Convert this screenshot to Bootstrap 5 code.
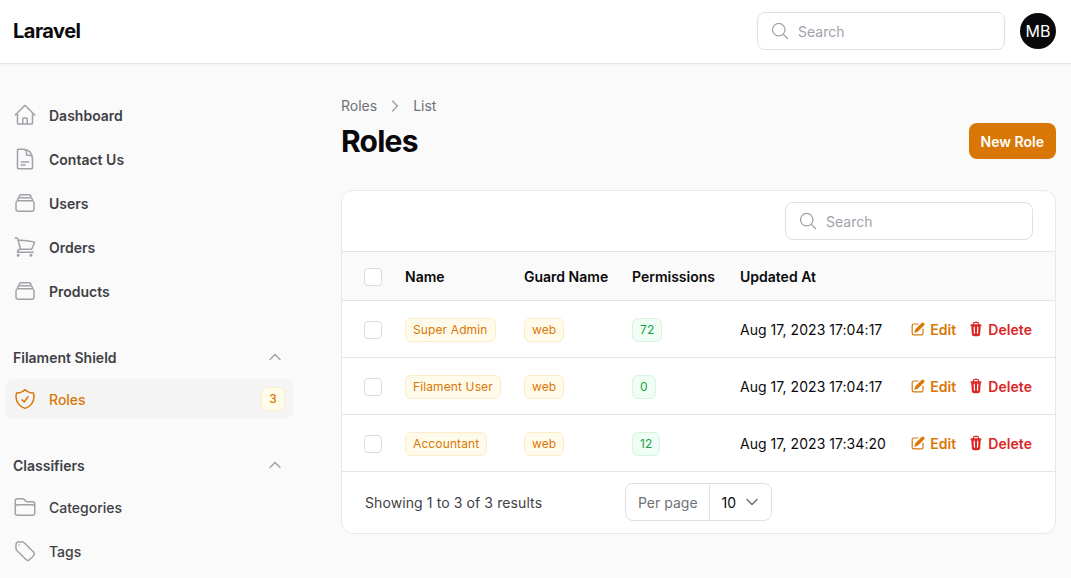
<!DOCTYPE html>
<html lang="en">
<head>
  <meta charset="UTF-8" />
  <meta name="viewport" content="width=device-width, initial-scale=1" />
  <title>Roles - Laravel</title>
  <link href="https://cdn.jsdelivr.net/npm/bootstrap@5.3.0/dist/css/bootstrap.min.css" rel="stylesheet" />
  <style>
    html, body { height: 578px; overflow: hidden; }
    body { background: #fafafa; font-family: Inter, "Liberation Sans", sans-serif; font-size: 14px; color: #09090b; }
    .ic { width: 24px; height: 24px; fill: none; stroke: currentColor; stroke-width: 1.5; stroke-linecap: round; stroke-linejoin: round; flex: none; }
    .ic-solid { width: 16px; height: 16px; fill: currentColor; flex: none; }

    .topbar { height: 64px; background: #fff; border-bottom: 1px solid #e4e4e7; padding: 0 15px 1px 13px; box-shadow: 0 1px 2px rgba(0,0,0,.03); }
    .brand-name { font-size: 20px; font-weight: 700; letter-spacing: -.5px; color: #09090b; }
    .search-box { height: 38px; background: #fff; border: 1px solid #e0e0e4; border-radius: 8px; padding: 0 12px; color: #a1a1aa; gap: 8px; }
    .search-box .ic { width: 20px; height: 20px; }
    .search-top { width: 248px; }
    .search-table { width: 248px; }
    .avatar { width: 36px; height: 36px; border-radius: 50%; background: #09090b; color: #fff; font-size: 16px; margin-left: 15px; }

    .side { width: 300px; flex: none; padding: 31px 7px 0 5px; }
    .side-item { height: 40px; margin-bottom: 4px; padding: 0 8px; gap: 12px; border-radius: 8px; color: #3f3f46; font-weight: 500; text-decoration: none; }
    .side-item .ic { color: #a1a1aa; }
    .side-item.semi { font-weight: 600; }
    .side-item.on { background: #f4f4f5; color: #d97706; margin-bottom: 0; }
    .side-item.on .ic { color: #d97706; }
    .side-count { width: 24px; height: 24px; border-radius: 6px; font-size: 12px; font-weight: 500; background: #fffbeb; color: #d97706; border: 1px solid #fdeccb; margin-left: auto; }
    .side-group { height: 20px; padding: 0 10px 0 8px; margin: 0 0 12px; color: #3f3f46; font-weight: 600; }
    .side-group .ic { width: 16px; height: 16px; color: #a1a1aa; stroke-width: 2.2; }
    .gap-top { margin-top: 36px; }
    .gap-top-2 { margin-top: 36px; }

    .page-area { width: 715px; margin-left: 41px; padding-top: 33px; }
    .crumbs { font-size: 14px; color: #71717a; gap: 10px; height: 17px; }
    .crumbs .ic { width: 16px; height: 16px; color: #a1a1aa; stroke-width: 2.2; }
    .page-title { font-size: 30px; font-weight: 700; letter-spacing: -.75px; line-height: 36px; margin: 0; color: #09090b; }
    .btn-new { height: 36px; padding: 0 12px; background: #d97706; color: #fff; border: 0; border-radius: 8px; font-size: 14px; font-weight: 600; }
    .btn-new:hover { background: #c76d06; color: #fff; }
    .head-row { margin-top: 9px; margin-bottom: 31px; }

    .panel { background: #fff; border: 1px solid #e8e8eb; border-radius: 12px; overflow: hidden; }
    .panel-tools { height: 61px; padding: 0 22px 0 0; border-bottom: 1px solid #e4e4e7; }
    .role-table { width: 100%; margin: 0; border-collapse: collapse; table-layout: fixed; font-size: 14px; }
    .role-table th { height: 48px; background: #fafafa; font-weight: 600; padding: 2px 0 0; border-bottom: 1px solid #e4e4e7; white-space: nowrap; }
    .role-table td { height: 57px; padding: 1px 0 0; border-bottom: 1px solid #e4e4e7; white-space: nowrap; }
    .c-check { width: 63px; padding-left: 22px !important; }
    .c-name { width: 119px; }
    .c-guard { width: 108px; }
    .c-perm { width: 108px; }
    .c-date { width: 165px; }
    .date-text { letter-spacing: .04px; }
    .tick { width: 18px; height: 18px; display: block; background: #fff; border: 1px solid #dcdce0; border-radius: 4px; }
    td .tick { margin-top: 2px; }
    .pill { display: inline-block; font-size: 12px; font-weight: 400; letter-spacing: .12px; line-height: 16px; padding: 3px 7px; margin-top: 2px; border-radius: 6px; border: 1px solid; }
    .pill-amber { background: #fffbeb; color: #d97706; border-color: #fdeccb; }
    .pill-green { background: #f0fdf4; color: #16a34a; border-color: #d5f3df; }
    .act { gap: 12px; font-weight: 600; letter-spacing: .05px; padding-right: 23px; }
    .act a { text-decoration: none; gap: 4px; }
    .act-edit { color: #d97706; }
    .act-del { color: #dc2626; }

    .panel-foot { height: 61px; color: #3f3f46; padding-left: 23px; }
    .foot-text { width: 260px; letter-spacing: .1px; }
    .perpage { height: 38px; border: 1px solid #e0e0e4; border-radius: 8px; color: #71717a; }
    .perpage-label { padding: 0 11px 0 12px; height: 100%; border-right: 1px solid #e4e4e7; }
    .perpage-val { padding: 0 11px 0 12px; color: #09090b; gap: 8px; height: 100%; }
    .perpage-val .ic { width: 16px; height: 16px; color: #71717a; stroke-width: 2.2; }
  </style>
</head>
<body>

  <svg width="0" height="0" class="d-none">
    <symbol id="i-home" viewBox="0 0 24 24"><path d="M2.25 12l8.954-8.955c.44-.439 1.152-.439 1.591 0L21.75 12M4.5 9.75v10.125c0 .621.504 1.125 1.125 1.125H9.75v-4.875c0-.621.504-1.125 1.125-1.125h2.25c.621 0 1.125.504 1.125 1.125V21h4.125c.621 0 1.125-.504 1.125-1.125V9.75M8.25 21h8.25"/></symbol>
    <symbol id="i-doc" viewBox="0 0 24 24"><path d="M19.5 14.25v-2.625a3.375 3.375 0 00-3.375-3.375h-1.5A1.125 1.125 0 0113.5 7.125v-1.5a3.375 3.375 0 00-3.375-3.375H8.25m0 12.75h7.5m-7.5 3H12M10.5 2.25H5.625c-.621 0-1.125.504-1.125 1.125v17.25c0 .621.504 1.125 1.125 1.125h12.75c.621 0 1.125-.504 1.125-1.125V11.25a9 9 0 00-9-9z"/></symbol>
    <symbol id="i-stack" viewBox="0 0 24 24"><path d="M6 6.878V6a2.25 2.25 0 012.25-2.25h7.5A2.25 2.25 0 0118 6v.878m-12 0c.235-.083.487-.128.75-.128h10.5c.263 0 .515.045.75.128m-12 0A2.25 2.25 0 004.5 9v.878m13.5-3A2.25 2.25 0 0119.5 9v.878m0 0a2.246 2.246 0 00-.75-.128H5.25c-.263 0-.515.045-.75.128m15 0A2.25 2.25 0 0121 12v6a2.25 2.25 0 01-2.25 2.25H5.25A2.25 2.25 0 013 18v-6c0-.98.626-1.813 1.5-2.122"/></symbol>
    <symbol id="i-cart" viewBox="0 0 24 24"><path d="M2.25 3h1.386c.51 0 .955.343 1.087.835l.383 1.437M7.5 14.25a3 3 0 00-3 3h15.75m-12.75-3h11.218c1.121-2.3 2.1-4.684 2.924-7.138a60.114 60.114 0 00-16.536-1.84M7.5 14.25L5.106 5.272M6 20.25a.75.75 0 11-1.5 0 .75.75 0 011.5 0zm12.75 0a.75.75 0 11-1.5 0 .75.75 0 011.5 0z"/></symbol>
    <symbol id="i-shield" viewBox="0 0 24 24"><path d="M9 12.75L11.25 15 15 9.75m-3-7.036A11.959 11.959 0 013.598 6 11.99 11.99 0 003 9.749c0 5.592 3.824 10.29 9 11.623 5.176-1.332 9-6.03 9-11.622 0-1.31-.21-2.571-.598-3.751h-.152c-3.196 0-6.1-1.248-8.25-3.285z"/></symbol>
    <symbol id="i-folder" viewBox="0 0 24 24"><path d="M2.25 12.75V12A2.25 2.25 0 014.5 9.75h15A2.25 2.25 0 0121.75 12v.75m-8.69-6.44l-2.12-2.12a1.5 1.5 0 00-1.061-.44H4.5A2.25 2.25 0 002.25 6v12a2.25 2.25 0 002.25 2.25h15A2.25 2.25 0 0021.75 18V9a2.25 2.25 0 00-2.25-2.25h-5.379a1.5 1.5 0 01-1.06-.44z"/></symbol>
    <symbol id="i-tag" viewBox="0 0 24 24"><path d="M9.568 3H5.25A2.25 2.25 0 003 5.25v4.318c0 .597.237 1.17.659 1.591l9.581 9.581c.699.699 1.78.872 2.607.33a18.095 18.095 0 005.223-5.223c.542-.827.369-1.908-.33-2.607L11.16 3.66A2.25 2.25 0 009.568 3z"/><path d="M6 6h.008v.008H6V6z"/></symbol>
    <symbol id="i-search" viewBox="0 0 24 24"><path d="M21 21l-5.197-5.197m0 0A7.5 7.5 0 105.196 5.196a7.5 7.5 0 0010.607 10.607z"/></symbol>
    <symbol id="i-up" viewBox="0 0 24 24"><path d="M4.5 15.75l7.5-7.5 7.5 7.5"/></symbol>
    <symbol id="i-right" viewBox="0 0 24 24"><path d="M8.25 4.5l7.5 7.5-7.5 7.5"/></symbol>
    <symbol id="i-down" viewBox="0 0 24 24"><path d="M19.5 8.25l-7.5 7.5-7.5-7.5"/></symbol>
    <symbol id="i-edit" viewBox="0 0 20 20"><path d="M5.433 13.917l1.262-3.155A4 4 0 017.58 9.42l6.92-6.918a2.121 2.121 0 013 3l-6.92 6.918c-.383.383-.84.685-1.343.886l-3.154 1.262a.5.5 0 01-.65-.65z"/><path d="M3.5 5.75c0-.69.56-1.25 1.25-1.25H10A.75.75 0 0010 3H4.75A2.75 2.75 0 002 5.75v9.5A2.75 2.75 0 004.75 18h9.5A2.75 2.75 0 0017 15.25V10a.75.75 0 00-1.5 0v5.25c0 .69-.56 1.25-1.25 1.25h-9.5c-.69 0-1.25-.56-1.25-1.25v-9.5z"/></symbol>
    <symbol id="i-trash" viewBox="0 0 20 20"><path fill-rule="evenodd" clip-rule="evenodd" d="M8.75 1A2.75 2.75 0 006 3.75v.443c-.795.077-1.584.176-2.365.298a.75.75 0 10.23 1.482l.149-.022.841 10.518A2.75 2.75 0 007.596 19h4.807a2.75 2.75 0 002.742-2.53l.841-10.52.149.023a.75.75 0 00.23-1.482A41.03 41.03 0 0014 4.193V3.75A2.75 2.75 0 0011.25 1h-2.5zM10 4c.84 0 1.673.025 2.5.075V3.75c0-.69-.56-1.25-1.25-1.25h-2.5c-.69 0-1.25.56-1.25 1.25v.325C8.327 4.025 9.16 4 10 4zM8.58 7.72a.75.75 0 00-1.5.06l.3 7.5a.75.75 0 101.5-.06l-.3-7.5zm4.34.06a.75.75 0 10-1.5-.06l-.3 7.5a.75.75 0 101.5.06l.3-7.5z"/></symbol>
  </svg>

  <!-- Topbar -->
  <header class="topbar d-flex align-items-center justify-content-between">
    <span class="brand-name">Laravel</span>
    <div class="d-flex align-items-center">
      <div class="search-box search-top d-flex align-items-center">
        <svg class="ic"><use href="#i-search"/></svg>
        <span>Search</span>
      </div>
      <div class="avatar d-flex align-items-center justify-content-center">MB</div>
    </div>
  </header>

  <div class="d-flex">
    <!-- Sidebar -->
    <nav class="side">
      <a class="side-item semi d-flex align-items-center" href="#"><svg class="ic"><use href="#i-home"/></svg>Dashboard</a>
      <a class="side-item semi d-flex align-items-center" href="#"><svg class="ic"><use href="#i-doc"/></svg>Contact Us</a>
      <a class="side-item semi d-flex align-items-center" href="#"><svg class="ic"><use href="#i-stack"/></svg>Users</a>
      <a class="side-item semi d-flex align-items-center" href="#"><svg class="ic"><use href="#i-cart"/></svg>Orders</a>
      <a class="side-item semi d-flex align-items-center" href="#"><svg class="ic"><use href="#i-stack"/></svg>Products</a>

      <div class="side-group gap-top d-flex align-items-center justify-content-between">
        <span>Filament Shield</span>
        <svg class="ic"><use href="#i-up"/></svg>
      </div>
      <a class="side-item on d-flex align-items-center" href="#">
        <svg class="ic"><use href="#i-shield"/></svg>Roles
        <span class="side-count d-flex align-items-center justify-content-center">3</span>
      </a>

      <div class="side-group gap-top-2 d-flex align-items-center justify-content-between">
        <span>Classifiers</span>
        <svg class="ic"><use href="#i-up"/></svg>
      </div>
      <a class="side-item d-flex align-items-center" href="#"><svg class="ic"><use href="#i-folder"/></svg>Categories</a>
      <a class="side-item d-flex align-items-center" href="#"><svg class="ic"><use href="#i-tag"/></svg>Tags</a>
    </nav>

    <!-- Main -->
    <main class="page-area">
      <div class="crumbs d-flex align-items-center">
        <span>Roles</span>
        <svg class="ic"><use href="#i-right"/></svg>
        <span>List</span>
      </div>
      <div class="head-row d-flex align-items-center justify-content-between">
        <h1 class="page-title">Roles</h1>
        <button class="btn btn-new">New Role</button>
      </div>

      <div class="panel">
        <div class="panel-tools d-flex align-items-center justify-content-end">
          <div class="search-box search-table d-flex align-items-center">
            <svg class="ic"><use href="#i-search"/></svg>
            <span>Search</span>
          </div>
        </div>
        <table class="role-table">
          <thead>
            <tr>
              <th class="c-check"><span class="tick"></span></th>
              <th class="c-name">Name</th>
              <th class="c-guard">Guard Name</th>
              <th class="c-perm">Permissions</th>
              <th class="c-date">Updated At</th>
              <th></th>
            </tr>
          </thead>
          <tbody>
            <tr>
              <td class="c-check"><span class="tick"></span></td>
              <td><span class="pill pill-amber">Super Admin</span></td>
              <td><span class="pill pill-amber">web</span></td>
              <td><span class="pill pill-green">72</span></td>
              <td class="date-text">Aug 17, 2023 17:04:17</td>
              <td>
                <div class="act d-flex justify-content-end">
                  <a class="act-edit d-flex align-items-center" href="#"><svg class="ic-solid"><use href="#i-edit"/></svg>Edit</a>
                  <a class="act-del d-flex align-items-center" href="#"><svg class="ic-solid"><use href="#i-trash"/></svg>Delete</a>
                </div>
              </td>
            </tr>
            <tr>
              <td class="c-check"><span class="tick"></span></td>
              <td><span class="pill pill-amber">Filament User</span></td>
              <td><span class="pill pill-amber">web</span></td>
              <td><span class="pill pill-green">0</span></td>
              <td class="date-text">Aug 17, 2023 17:04:17</td>
              <td>
                <div class="act d-flex justify-content-end">
                  <a class="act-edit d-flex align-items-center" href="#"><svg class="ic-solid"><use href="#i-edit"/></svg>Edit</a>
                  <a class="act-del d-flex align-items-center" href="#"><svg class="ic-solid"><use href="#i-trash"/></svg>Delete</a>
                </div>
              </td>
            </tr>
            <tr>
              <td class="c-check"><span class="tick"></span></td>
              <td><span class="pill pill-amber">Accountant</span></td>
              <td><span class="pill pill-amber">web</span></td>
              <td><span class="pill pill-green">12</span></td>
              <td class="date-text">Aug 17, 2023 17:34:20</td>
              <td>
                <div class="act d-flex justify-content-end">
                  <a class="act-edit d-flex align-items-center" href="#"><svg class="ic-solid"><use href="#i-edit"/></svg>Edit</a>
                  <a class="act-del d-flex align-items-center" href="#"><svg class="ic-solid"><use href="#i-trash"/></svg>Delete</a>
                </div>
              </td>
            </tr>
          </tbody>
        </table>
        <div class="panel-foot d-flex align-items-center">
          <span class="foot-text">Showing 1 to 3 of 3 results</span>
          <div class="perpage d-flex align-items-center">
            <span class="perpage-label d-flex align-items-center">Per page</span>
            <span class="perpage-val d-flex align-items-center">10 <svg class="ic"><use href="#i-down"/></svg></span>
          </div>
        </div>
      </div>
    </main>
  </div>

  <script src="https://cdn.jsdelivr.net/npm/bootstrap@5.3.0/dist/js/bootstrap.bundle.min.js"></script>
</body>
</html>
